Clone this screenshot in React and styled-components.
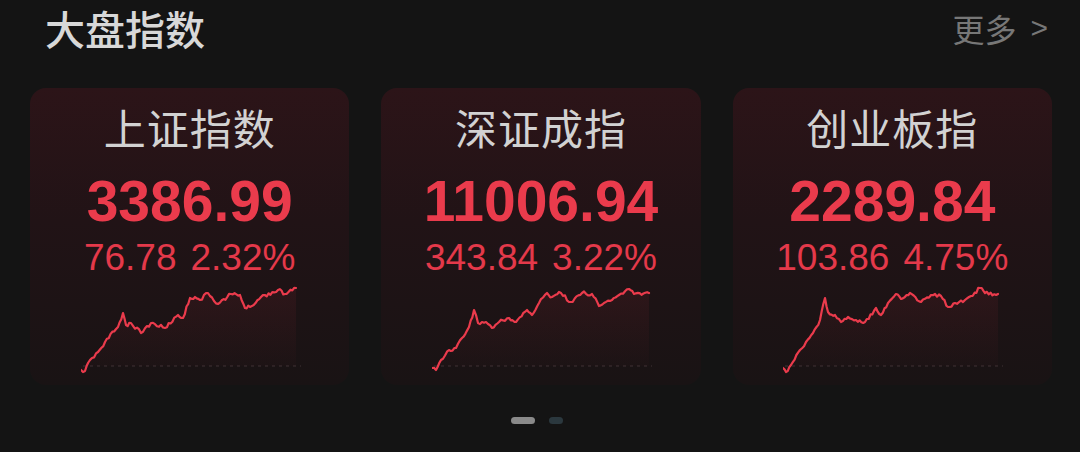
import styled, { createGlobalStyle } from "styled-components";

const GlobalStyle = createGlobalStyle`
  html, body {
    margin: 0;
    padding: 0;
    background: #141414;
    width: 1080px;
    height: 452px;
    overflow: hidden;
  }
`;

// key points of each sparkline, in chart coords (220 x 90)
const charts = [
  [
    [0, 85], [4, 86], [9, 75], [17, 67], [24, 57], [37, 42], [42, 28], [45, 40],
    [50, 38], [60, 48], [70, 38], [84, 43], [97, 30], [102, 33], [109, 13],
    [114, 12], [119, 15], [127, 8], [137, 19], [150, 9], [159, 10], [164, 23],
    [169, 22], [180, 12], [197, 5], [204, 9], [215, 3],
  ],
  [
    [0, 83], [4, 85], [9, 75], [17, 65], [24, 63], [30, 53], [37, 42], [42, 25],
    [46, 38], [54, 37], [60, 43], [67, 37], [77, 33], [84, 37], [95, 25],
    [100, 30], [107, 18], [115, 8], [120, 12], [127, 7], [139, 17], [150, 8],
    [160, 9], [167, 21], [172, 18], [180, 15], [187, 10], [197, 4], [202, 9],
    [217, 8],
  ],
  [
    [0, 83], [3, 87], [8, 80], [17, 65], [23, 57], [30, 48], [37, 35], [42, 13],
    [45, 27], [52, 30], [58, 37], [65, 32], [73, 35], [82, 37], [93, 23],
    [98, 30], [105, 18], [113, 9], [118, 14], [127, 8], [138, 17], [148, 10],
    [158, 11], [165, 22], [172, 18], [182, 15], [188, 11], [197, 3], [202, 8],
    [215, 9],
  ],
];

const jitter = (seed) => {
  const v = Math.sin(seed * 12.9898) * 43758.5453;
  return (v - Math.floor(v)) * 2 - 1;
};

const buildLine = (pts, seed) => {
  const out = [];
  let n = seed * 100;
  pts.forEach((p, i) => {
    out.push(p);
    const next = pts[i + 1];
    if (!next) return;
    const steps = Math.max(1, Math.round((next[0] - p[0]) / 2));
    for (let s = 1; s < steps; s++) {
      const t = s / steps;
      n += 1;
      out.push([
        p[0] + (next[0] - p[0]) * t,
        p[1] + (next[1] - p[1]) * t + jitter(n) * 1.8,
      ]);
    }
  });
  return out;
};

const indices = [
  { name: "上证指数", value: "3386.99", change: "76.78", pct: "2.32%" },
  { name: "深证成指", value: "11006.94", change: "343.84", pct: "3.22%" },
  { name: "创业板指", value: "2289.84", change: "103.86", pct: "4.75%" },
];

const Sparkline = ({ points, id }) => {
  const line = buildLine(points, id + 1);
  const d = line.map((p, i) => `${i ? "L" : "M"}${p[0].toFixed(1)},${p[1].toFixed(1)}`).join(" ");
  const last = line[line.length - 1];
  const area = `${d} L${last[0].toFixed(1)},81 L0,81 Z`;
  return (
    <ChartSvg width="222" height="90" viewBox="0 0 222 90">
      <defs>
        <linearGradient id={`fill${id}`} x1="0" y1="0" x2="0" y2="1">
          <stop offset="0%" stopColor="#e8384a" stopOpacity="0.08" />
          <stop offset="100%" stopColor="#e8384a" stopOpacity="0.01" />
        </linearGradient>
      </defs>
      <line x1="2" y1="81" x2="220" y2="81" stroke="#3e3335" strokeWidth="1" strokeDasharray="3 4" />
      <path d={area} fill={`url(#fill${id})`} />
      <path d={d} fill="none" stroke="#ea3b4c" strokeWidth="2.2" strokeLinejoin="round" strokeLinecap="round" />
    </ChartSvg>
  );
};

const App = () => {
  return (
    <>
      <GlobalStyle />
      <Page>
        <Header>
          <Title>大盘指数</Title>
          <More>
            更多<Arrow>&gt;</Arrow>
          </More>
        </Header>
        <CardRow>
          {indices.map((item, i) => (
            <Card key={item.name}>
              <CardName>{item.name}</CardName>
              <Value>{item.value}</Value>
              <Change>
                <span>{item.change}</span>
                <span>{item.pct}</span>
              </Change>
              <Sparkline points={charts[i]} id={i} />
            </Card>
          ))}
        </CardRow>
        <Pager>
          <PagerDot active />
          <PagerDot />
        </Pager>
      </Page>
    </>
  );
};

export default App;

const Page = styled.div`
  width: 1080px;
  height: 452px;
  background: #141414;
  font-family: "Noto Sans CJK SC", "Liberation Sans", sans-serif;
`;

const Header = styled.div`
  display: flex;
  justify-content: space-between;
  align-items: center;
  padding: 8px 32px 0 45px;
  height: 40px;
`;

const Title = styled.div`
  font-size: 40px;
  line-height: 40px;
  font-weight: 500;
  color: #d8d8d8;
`;

const More = styled.div`
  display: flex;
  align-items: center;
  font-size: 32px;
  line-height: 32px;
  color: #777777;
`;

const Arrow = styled.span`
  margin-left: 14px;
  font-family: "Liberation Sans", Arial, sans-serif;
  font-size: 30px;
`;

const CardRow = styled.div`
  display: flex;
  gap: 32px;
  padding: 0 28px 0 30px;
  margin-top: 40px;
`;

const Card = styled.div`
  width: 320px;
  height: 297px;
  box-sizing: border-box;
  border-radius: 16px;
  background: linear-gradient(180deg, #2c1418 0%, #211316 45%, #191314 100%);
  display: flex;
  flex-direction: column;
  align-items: center;
  padding-top: 18px;
`;

const CardName = styled.div`
  font-size: 42px;
  line-height: 42px;
  color: #d2d2d2;
  letter-spacing: 1px;
`;

const Value = styled.div`
  margin-top: 25px;
  font-family: "Liberation Sans", Arial, sans-serif;
  font-size: 57px;
  line-height: 56px;
  font-weight: 700;
  color: #ea3b4c;
`;

const Change = styled.div`
  margin-top: 11px;
  display: flex;
  gap: 14px;
  font-family: "Liberation Sans", Arial, sans-serif;
  font-size: 37px;
  line-height: 36px;
  color: #e4394a;
`;

const ChartSvg = styled.svg`
  display: block;
  margin-top: 9px;
  margin-left: 4px;
`;

const Pager = styled.div`
  display: flex;
  justify-content: center;
  gap: 14px;
  margin-top: 32px;
  padding-right: 6px;
`;

const PagerDot = styled.div`
  width: ${(props) => (props.active ? "24px" : "14px")};
  height: 7px;
  border-radius: 4px;
  background: ${(props) => (props.active ? "#8a8a8a" : "#2b383e")};
`;
